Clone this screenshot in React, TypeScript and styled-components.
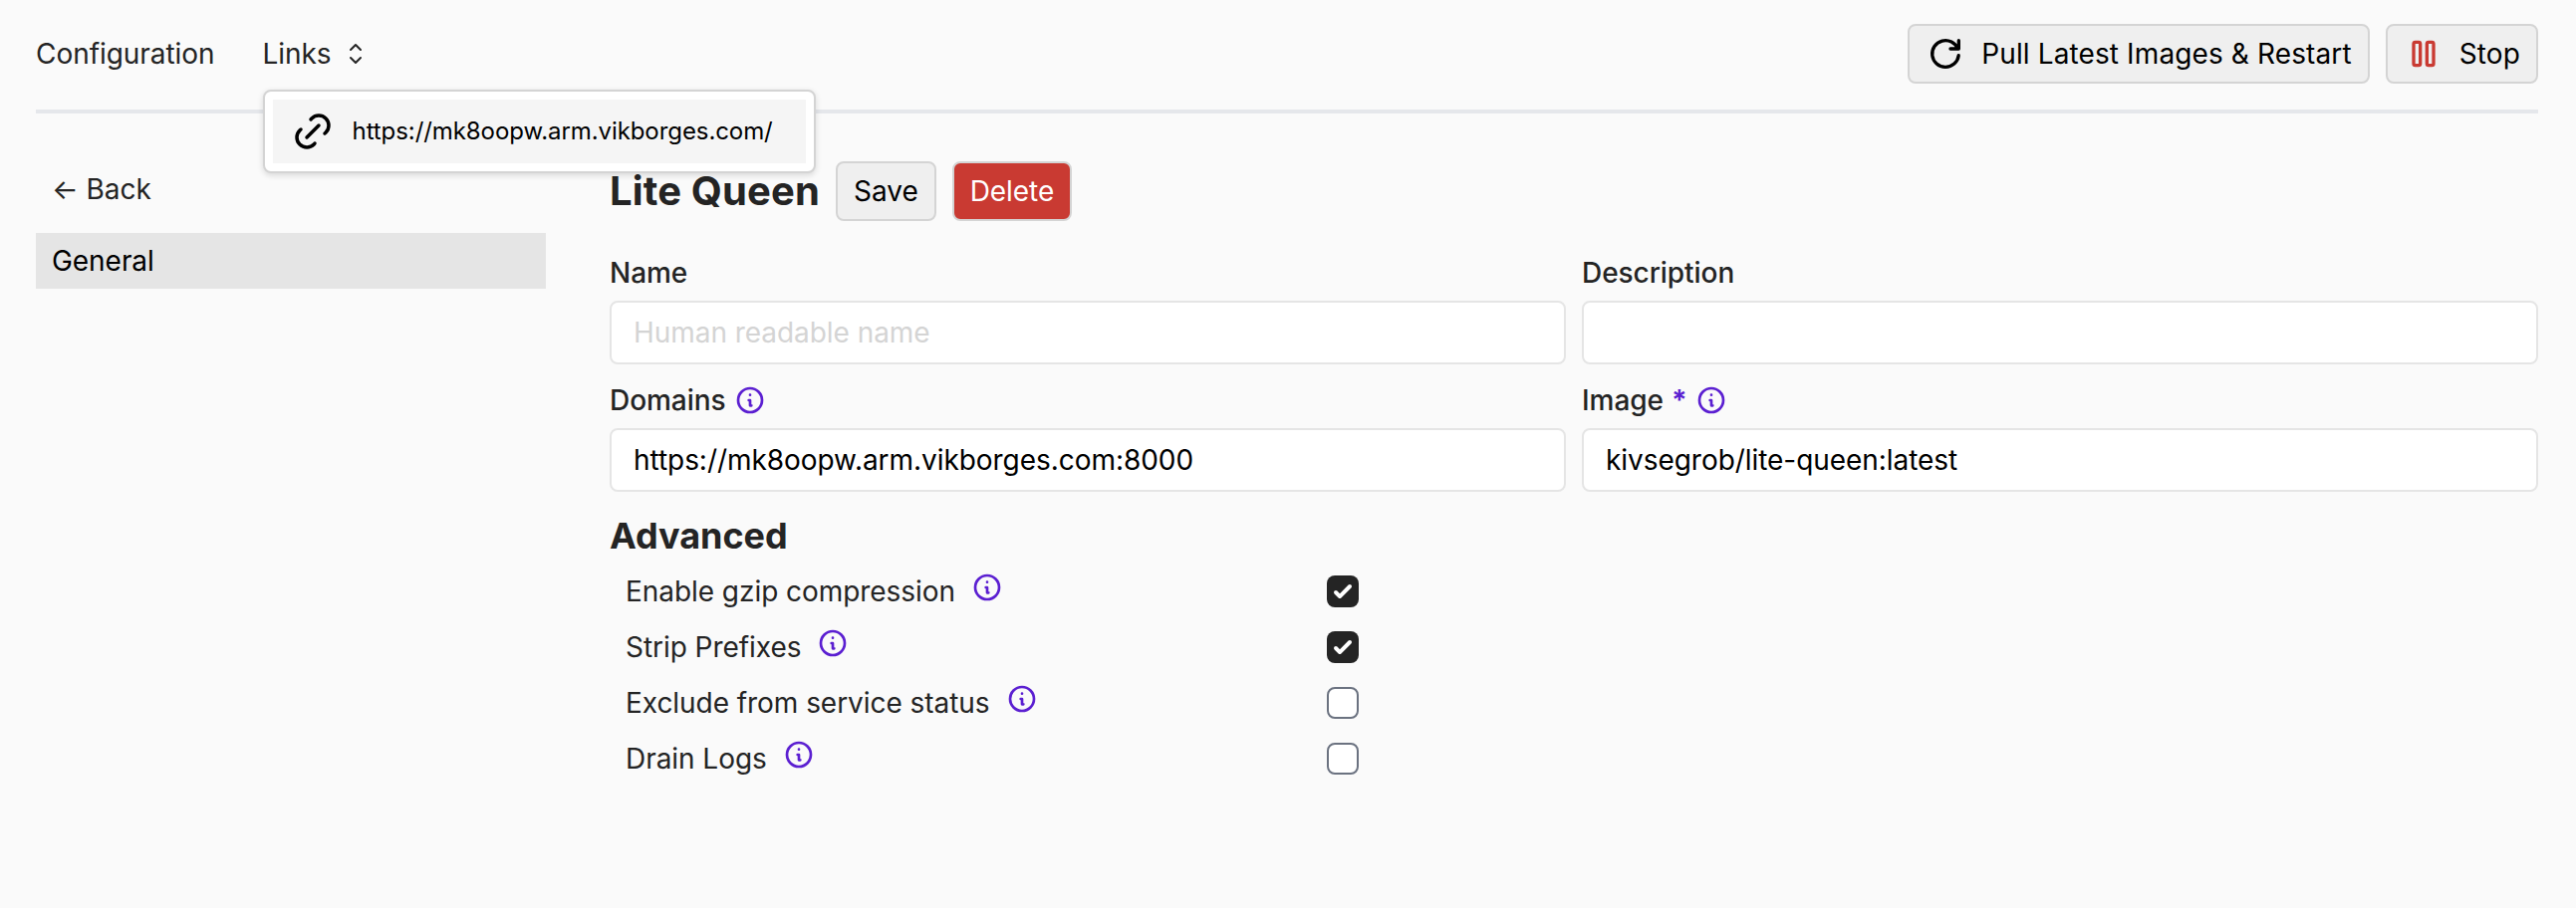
import React from 'react';
import styled, { createGlobalStyle } from 'styled-components';

const GlobalStyle = createGlobalStyle`
  *, *::before, *::after { box-sizing: border-box; }
  body {
    margin: 0;
    min-height: 912px;
    background: #fafafa;
    color: #242424;
    font: 400 28px/40px Inter, "Liberation Sans", sans-serif;
    letter-spacing: -0.05px;
  }
  button, input { font: inherit; letter-spacing: inherit; }
  svg { display: block; flex: none; fill: none; stroke: currentColor; stroke-linecap: round; stroke-linejoin: round; }
`;

const Page = styled.div`
  padding: 24px 38px 0 36px;
`;

const TopBar = styled.header`
  display: flex;
  align-items: center;
  justify-content: space-between;
  height: 90px;
  padding-bottom: 26px;
  border-bottom: 4px solid #e5e7eb;
`;

const TopNav = styled.nav`
  display: flex;
  align-items: center;
  gap: 48px;
`;

const LinksMenu = styled.div`
  position: relative;
  display: flex;
  align-items: center;
  gap: 8px;
`;

const Dropdown = styled.div`
  position: absolute;
  top: 56px;
  left: 0;
  z-index: 2;
  width: 555px;
  padding: 8px;
  background: #fff;
  border: 2px solid #d4d4d4;
  border-radius: 8px;
  box-shadow: 0 2px 6px rgba(0, 0, 0, 0.14);
`;

const DropdownItem = styled.a`
  display: flex;
  align-items: center;
  gap: 16px;
  height: 64px;
  padding: 0 16px;
  background: #f5f5f5;
  color: #000;
  font-size: 24px;
  letter-spacing: -0.08px;
`;

const Actions = styled.div`
  display: flex;
  gap: 16px;
  letter-spacing: 0.12px;
`;

const Button = styled.button<{ $danger?: boolean }>`
  display: flex;
  align-items: center;
  gap: 16px;
  height: 60px;
  padding: 0 16px;
  border: 2px solid #d4d4d4;
  border-radius: 8px;
  background: ${(p) => (p.$danger ? '#c93a32' : '#efefef')};
  color: ${(p) => (p.$danger ? '#fff' : '#000')};
  white-space: nowrap;
`;

const Body = styled.div`
  display: flex;
  gap: 64px;
  padding-top: 48px;
`;

const Sidebar = styled.aside`
  width: 512px;
  padding-top: 8px;
`;

const BackLink = styled.a`
  display: flex;
  align-items: center;
  height: 40px;
  padding-left: 16px;
  margin-bottom: 24px;
`;

const SidebarItem = styled.a`
  display: block;
  padding: 8px 16px;
  background: #e5e5e5;
  color: #000;
`;

const Main = styled.main`
  flex: 1;
`;

const TitleRow = styled.div`
  display: flex;
  align-items: center;
  gap: 16px;
  height: 60px;
  margin-bottom: 32px;
`;

const Title = styled.h1`
  margin: 0;
  font-size: 40px;
  line-height: 56px;
  font-weight: 700;
  letter-spacing: 0.15px;
`;

const FieldGrid = styled.div`
  display: grid;
  grid-template-columns: 1fr 1fr;
  column-gap: 16px;
  row-gap: 16px;
`;

const Label = styled.label`
  display: flex;
  align-items: center;
  gap: 8px;
  height: 40px;
  margin-bottom: 8px;
  font-weight: 500;
`;

const Required = styled.span`
  color: #5b1fd1;
  font-weight: 700;
`;

const Input = styled.input`
  display: block;
  width: 100%;
  height: 64px;
  padding: 0 22px;
  border: 2px solid #e5e5e5;
  border-radius: 8px;
  background: #fff;
  color: #000;
  &::placeholder { color: #d4d4d4; opacity: 1; }
`;

const SectionTitle = styled.h2`
  margin: 16px 0 0;
  font-size: 36px;
  line-height: 56px;
  font-weight: 700;
`;

const OptionRow = styled.div`
  display: flex;
  align-items: center;
  justify-content: space-between;
  width: 752px;
  height: 56px;
  padding-left: 16px;
`;

const OptionLabel = styled.span`
  display: flex;
  align-items: center;
  gap: 16px;
`;

const HintSlot = styled.span<{ $raised?: boolean }>`
  color: #5b1fd1;
  padding-bottom: ${(p) => (p.$raised ? '8px' : '0')};
`;

const Checkbox = styled.span<{ $checked: boolean }>`
  width: 32px;
  height: 32px;
  border-radius: 8px;
  border: ${(p) => (p.$checked ? 'none' : '2px solid #6b7280')};
  background: ${(p) => (p.$checked ? '#242424' : '#fff')};
  color: #fff;
`;

const Hint = ({ raised }: { raised?: boolean }) => (
  <HintSlot $raised={raised}>
    <svg width="32" height="32" viewBox="0 0 24 24" strokeWidth="2">
      <path d="M13 16h-1v-4h-1m1-4h.01M21 12a9 9 0 11-18 0 9 9 0 0118 0z" />
    </svg>
  </HintSlot>
);

const fields = [
  { label: 'Name', placeholder: 'Human readable name' },
  { label: 'Description' },
  { label: 'Domains', value: 'https://mk8oopw.arm.vikborges.com:8000', hint: true },
  { label: 'Image', value: 'kivsegrob/lite-queen:latest', required: true, hint: true },
];

const options = [
  { label: 'Enable gzip compression', checked: true },
  { label: 'Strip Prefixes', checked: true },
  { label: 'Exclude from service status', checked: false },
  { label: 'Drain Logs', checked: false },
];

export default function App() {
  return (
    <Page>
      <GlobalStyle />
      <TopBar>
        <TopNav>
          <span>Configuration</span>
          <LinksMenu>
            Links
            <svg width="32" height="32" viewBox="0 0 24 24" strokeWidth="1.5">
              <path d="M8.25 15L12 18.75 15.75 15m-7.5-6L12 5.25 15.75 9" />
            </svg>
            <Dropdown>
              <DropdownItem>
                <svg width="48" height="48" viewBox="0 0 24 24" strokeWidth="1.75">
                  <path d="M9 15l6-6M11 6l.463-.536a5 5 0 0 1 7.071 7.072L18 13M13 18l-.397.534a5.068 5.068 0 0 1-7.127 0a4.972 4.972 0 0 1 0-7.071L6 11" />
                </svg>
                https://mk8oopw.arm.vikborges.com/
              </DropdownItem>
            </Dropdown>
          </LinksMenu>
        </TopNav>
        <Actions>
          <Button>
            <svg width="40" height="40" viewBox="0 0 24 24" strokeWidth="2">
              <path d="M19.933 13.041a8 8 0 1 1-9.925-8.788c3.899-1 7.935 1.007 9.425 4.747M20 4v5h-5" />
            </svg>
            Pull Latest Images &amp; Restart
          </Button>
          <Button>
            <svg width="40" height="40" viewBox="0 0 24 24" strokeWidth="2" color="#c93a32">
              <path d="M6 6a1 1 0 0 1 1-1h2a1 1 0 0 1 1 1v12a1 1 0 0 1-1 1H7a1 1 0 0 1-1-1zM14 6a1 1 0 0 1 1-1h2a1 1 0 0 1 1 1v12a1 1 0 0 1-1 1h-2a1 1 0 0 1-1-1z" />
            </svg>
            Stop
          </Button>
        </Actions>
      </TopBar>
      <Body>
        <Sidebar>
          <BackLink>← Back</BackLink>
          <SidebarItem>General</SidebarItem>
        </Sidebar>
        <Main>
          <TitleRow>
            <Title>Lite Queen</Title>
            <Button>Save</Button>
            <Button $danger>Delete</Button>
          </TitleRow>
          <FieldGrid>
            {fields.map((f) => (
              <div key={f.label}>
                <Label>
                  {f.label}
                  {f.required && <Required>*</Required>}
                  {f.hint && <Hint />}
                </Label>
                <Input defaultValue={f.value} placeholder={f.placeholder} />
              </div>
            ))}
          </FieldGrid>
          <SectionTitle>Advanced</SectionTitle>
          {options.map((o) => (
            <OptionRow key={o.label}>
              <OptionLabel>
                {o.label}
                <Hint raised />
              </OptionLabel>
              <Checkbox $checked={o.checked}>
                {o.checked && (
                  <svg width="32" height="32" viewBox="0 0 16 16">
                    <path
                      fill="currentColor"
                      stroke="none"
                      d="M12.207 4.793a1 1 0 0 1 0 1.414l-5 5a1 1 0 0 1-1.414 0l-2-2a1 1 0 0 1 1.414-1.414L6.5 9.086l4.293-4.293a1 1 0 0 1 1.414 0z"
                    />
                  </svg>
                )}
              </Checkbox>
            </OptionRow>
          ))}
        </Main>
      </Body>
    </Page>
  );
}
